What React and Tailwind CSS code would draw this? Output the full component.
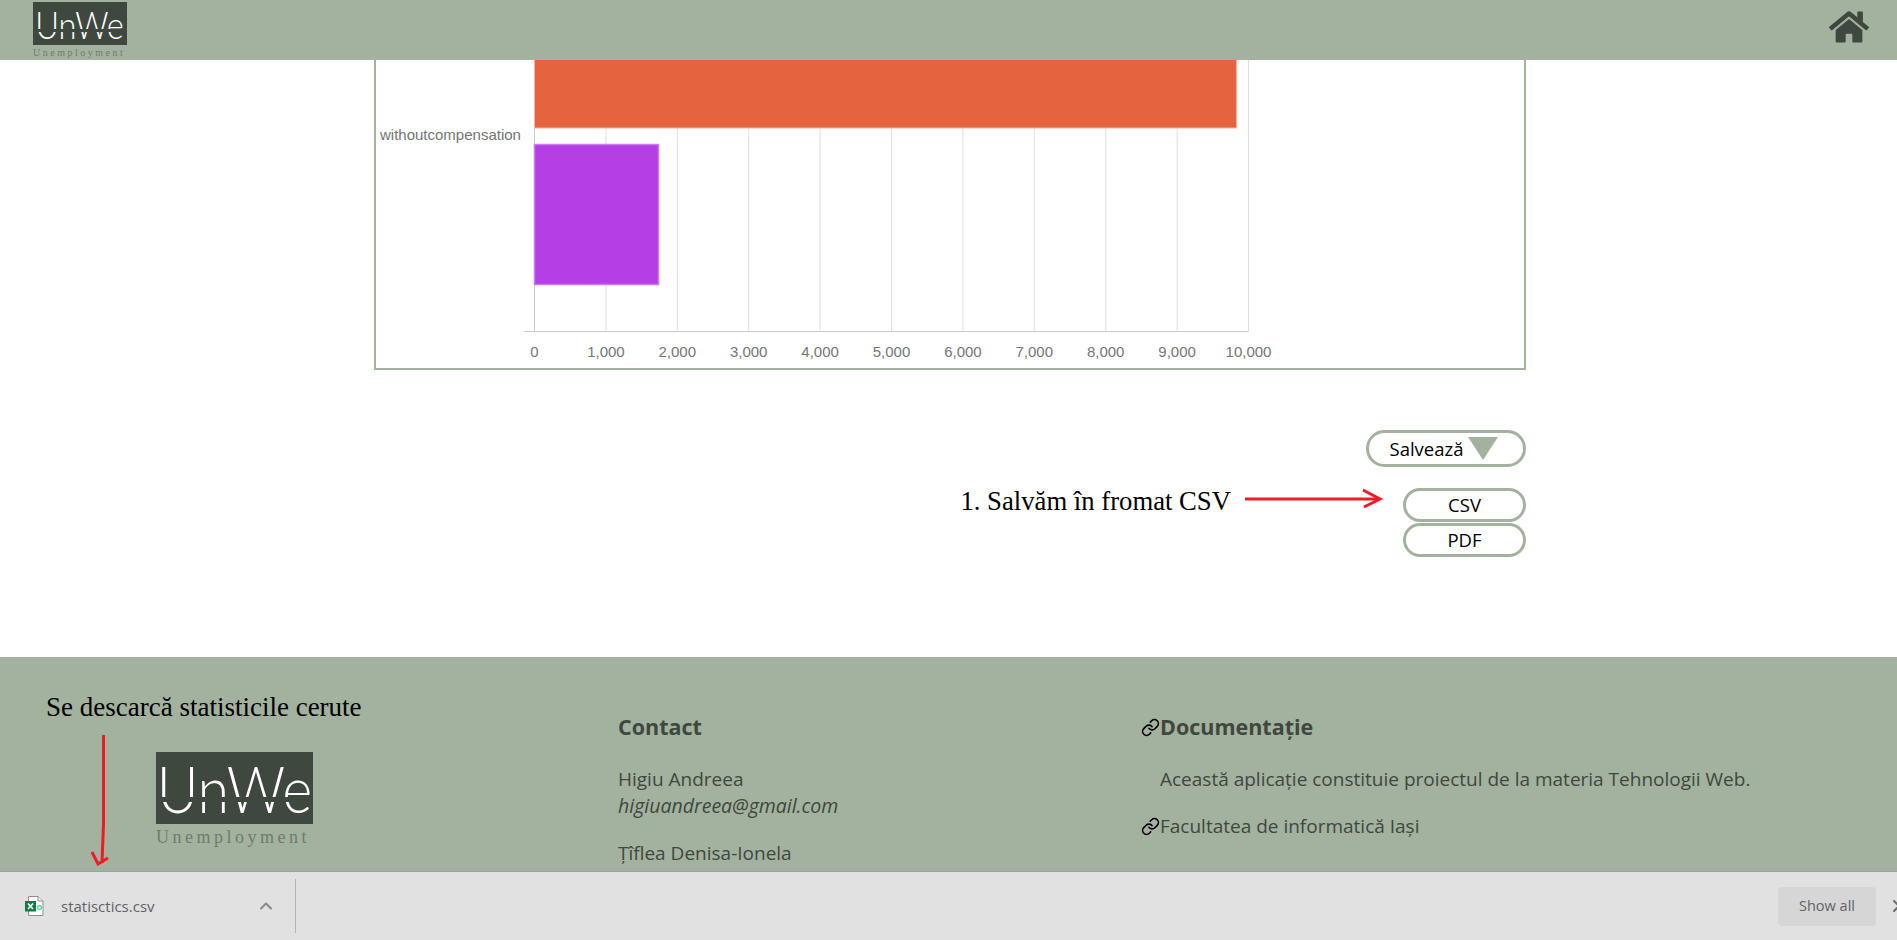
import React from "react";
import { FaHome } from "react-icons/fa";
import { Link as LinkIcon, ChevronUp, X } from "lucide-react";

const ticks = [0, 1000, 2000, 3000, 4000, 5000, 6000, 7000, 8000, 9000, 10000];
// chart coordinates are relative to the inside of the frame
const x0 = 158.5;
const step = 71.4;

function Chart() {
  return (
    <svg width="1148" height="308" className="block">
      {ticks.map((t, i) => (
        <line key={t} x1={x0 + i * step} x2={x0 + i * step} y1="0" y2="272" stroke="#e0e0e0" strokeWidth="1" />
      ))}
      <line x1={x0} x2={x0} y1="0" y2="272" stroke="#cccccc" strokeWidth="1" />
      <line x1="148" x2={x0 + 10 * step} y1="271.5" y2="271.5" stroke="#cccccc" strokeWidth="1" />
      <rect x={x0} y="-5" width="702" height="73" fill="#e5633d" stroke="#f3b3a0" strokeWidth="1" />
      <rect x={x0} y="84.5" width="124" height="140" fill="#b53ee5" stroke="#cb7aee" strokeWidth="1.5" />
      <text x="4" y="80" fontFamily="Liberation Sans, sans-serif" fontSize="15" fill="#757575">
        withoutcompensation
      </text>
      {ticks.map((t, i) => (
        <text key={t} x={x0 + i * step} y="297" textAnchor="middle" fontFamily="Liberation Sans, sans-serif" fontSize="15" fill="#757575">
          {t.toLocaleString("en-US")}
        </text>
      ))}
    </svg>
  );
}

function HeaderLogo() {
  return (
    <div className="ml-[33px] w-[94px] flex flex-col">
      <div className="relative h-[43px] mt-[2px] bg-[#3f483e] flex items-center justify-center">
        <span className="text-white text-[38px] leading-none font-light font-['Lato',sans-serif] scale-x-[0.86] whitespace-nowrap">UnWe</span>
        <div className="absolute left-0 right-0 top-[27px] h-[3px] bg-[#3f483e]"></div>
      </div>
      <span className="mt-[2px] text-[10px] leading-[12px] tracking-[2.5px] text-[#6f7c6d] font-['Liberation_Serif',serif] whitespace-nowrap">
        Unemployment
      </span>
    </div>
  );
}

function FooterLogo() {
  return (
    <div className="ml-[110px] mt-[29px] w-[157px] flex flex-col">
      <div className="relative h-[72px] bg-[#3f483e] flex items-center justify-center">
        <span className="text-white text-[66px] leading-none font-light font-['Lato',sans-serif] scale-x-[0.87] whitespace-nowrap">UnWe</span>
        <div className="absolute left-0 right-0 top-[45px] h-[5px] bg-[#3f483e]"></div>
      </div>
      <span className="mt-[3px] text-[18px] leading-[20px] tracking-[3.5px] text-[#6f7c6d] font-['Liberation_Serif',serif] whitespace-nowrap">
        Unemployment
      </span>
    </div>
  );
}

function ExcelIcon() {
  return (
    <svg width="19" height="20" viewBox="0 0 19 20" className="shrink-0">
      <path d="M3.5 .5H13L18 5V19.5H3.5Z" fill="#fff" stroke="#8f8f8f" strokeWidth="1" />
      <path d="M13 .5V5H18" fill="#eee" stroke="#8f8f8f" strokeWidth="1" />
      <rect x="0" y="5" width="11" height="10.5" fill="#107c41" />
      <path d="M3 7.5L8 13M8 7.5L3 13" stroke="#fff" strokeWidth="1.6" />
      <circle cx="14.5" cy="11.5" r="1.9" fill="none" stroke="#3ecf8e" strokeWidth="1.2" />
    </svg>
  );
}

export default function App() {
  return (
    <div className="h-screen overflow-hidden flex flex-col bg-white font-['Open_Sans',sans-serif]">
      <header className="h-[60px] shrink-0 bg-[#a3b19f] flex items-start justify-between overflow-hidden">
        <HeaderLogo />
        <FaHome className="mt-[7px] mr-[28px] text-[#3f483e]" size={40} />
      </header>

      <div className="flex-1 min-h-0 overflow-hidden flex flex-col">
        <section className="h-[597px] shrink-0 ml-[374px] w-[1152px]">
          <div className="h-[310px] border-x-2 border-b-2 border-[#a3b19f]">
            <Chart />
          </div>

          <div className="mt-[60px] flex flex-col items-end">
            <button className="w-[160px] h-[37px] pr-[4px] rounded-full border-[3px] border-[#a3b19f] flex items-center justify-center gap-[5px] text-[18.5px] text-black">
              <span>Salvează</span>
              <span className="w-0 h-0 border-x-[15px] border-x-transparent border-t-[23px] border-t-[#a3b19f]"></span>
            </button>

            <div className="mt-[21px] flex items-start">
              <div className="mt-[-3px] flex items-start">
                <span className="font-['Liberation_Serif',serif] text-[26.7px] leading-[32px] text-black whitespace-nowrap">
                  1. Salvăm în fromat CSV
                </span>
                <svg width="142" height="24" viewBox="0 0 142 24" className="ml-[13px] mr-[17px] mt-[2px]">
                  <path d="M1 12H135" stroke="#ed1c24" strokeWidth="3" fill="none" />
                  <path d="M119 3L136 12L120 20" stroke="#ed1c24" strokeWidth="3" fill="none" />
                </svg>
              </div>
              <div className="flex flex-col gap-[1px]">
                <button className="w-[123px] h-[34px] rounded-full border-[3px] border-[#a3b19f] text-[18.5px] leading-none text-black">CSV</button>
                <button className="w-[123px] h-[34px] rounded-full border-[3px] border-[#a3b19f] text-[18.5px] leading-none text-black">PDF</button>
              </div>
            </div>
          </div>
        </section>

        <footer className="relative flex-1 bg-[#a3b19f] text-[#3f483e] flex">
          <div className="w-[618px] shrink-0 pt-[34px] pl-[46px]">
            <p className="font-['Liberation_Serif',serif] text-[27px] leading-[32px] text-black whitespace-nowrap">
              Se descarcă statisticile cerute
            </p>
            <FooterLogo />
          </div>

          <div className="w-[523px] shrink-0 pt-[55px]">
            <h3 className="text-[21.5px] leading-[30px] font-bold">Contact</h3>
            <p className="mt-[24px] text-[19px] leading-[27px]">Higiu Andreea</p>
            <p className="text-[19.5px] leading-[26px] italic">higiuandreea@gmail.com</p>
            <p className="mt-[21px] text-[19px] leading-[27px]">Țîflea Denisa-Ionela</p>
          </div>

          <div className="flex-1 pt-[55px]">
            <h3 className="flex items-center text-[21.5px] leading-[30px] font-bold">
              <LinkIcon size={19} className="text-black w-[19px] shrink-0" strokeWidth={2} />
              Documentație
            </h3>
            <p className="mt-[24px] pl-[19px] text-[19px] leading-[27px]">
              Această aplicație constituie proiectul de la materia Tehnologii Web.
            </p>
            <p className="mt-[20px] flex items-center text-[19px] leading-[27px]">
              <LinkIcon size={19} className="text-black w-[19px] shrink-0" strokeWidth={2} />
              Facultatea de informatică Iași
            </p>
          </div>

          {/* hand drawn arrow over the footer */}
          <svg width="30" height="135" viewBox="0 0 30 135" className="absolute left-[88px] top-[77px]">
            <path d="M15.5 1V90L14 129" stroke="#ed1c24" strokeWidth="3" fill="none" />
            <path d="M4 118L10 130L20 124" stroke="#ed1c24" strokeWidth="3" fill="none" />
          </svg>
        </footer>
      </div>

      <div className="h-[69px] shrink-0 bg-[#e1e1e1] border-t border-[#a0a0a0] flex items-center">
        <div className="w-[295px] shrink-0 flex items-center pl-[25px] pr-[19px]">
          <ExcelIcon />
          <span className="ml-[17px] text-[15px] text-[#5f6368] whitespace-nowrap">statisctics.csv</span>
          <ChevronUp size={20} className="ml-auto text-[#8a8a8a]" strokeWidth={2.5} />
        </div>
        <div className="w-px h-[54px] bg-[#b4b4b4]"></div>
        <div className="flex-1 flex items-center justify-end">
          <button className="w-[98px] h-[39px] mr-[13px] rounded bg-[#d6d6d6] text-[14.5px] text-[#5f6368]">Show all</button>
          <X size={20} className="mr-[-12px] text-[#6f6f6f] shrink-0" strokeWidth={2.5} />
        </div>
      </div>
    </div>
  );
}
